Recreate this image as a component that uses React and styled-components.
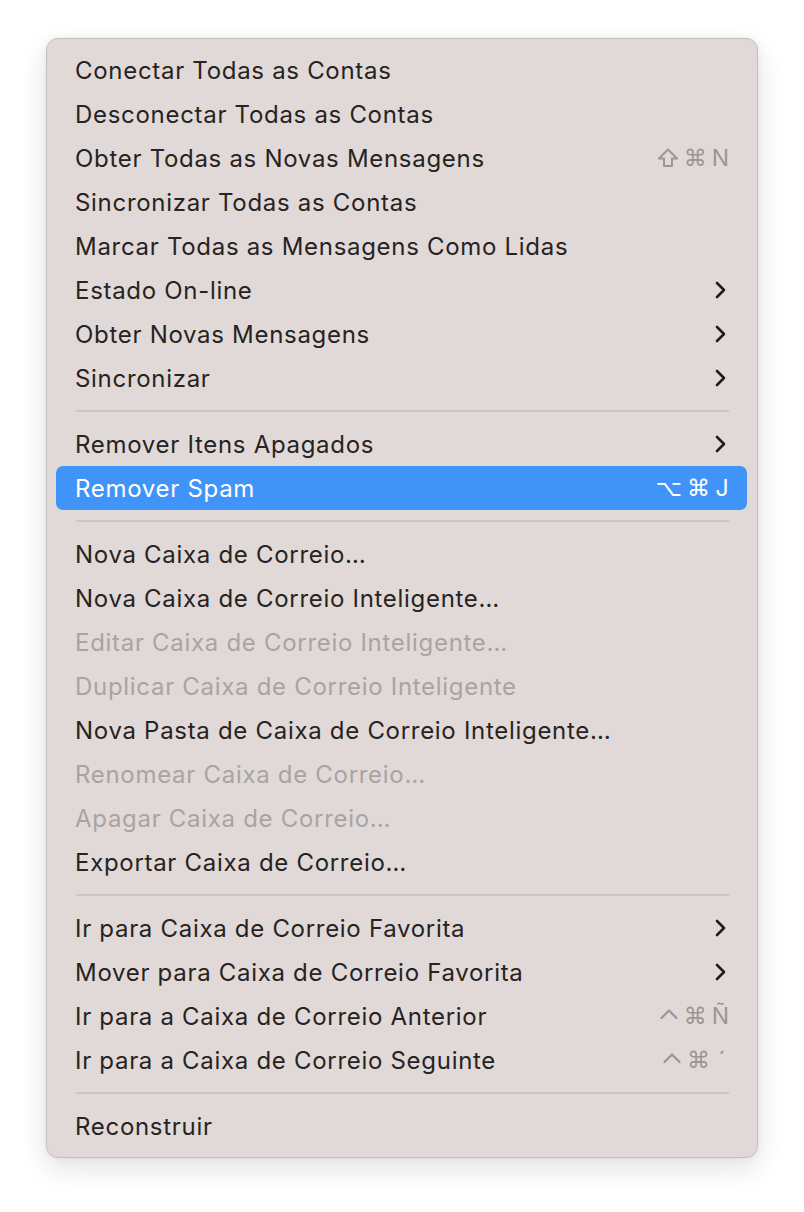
import styled, { createGlobalStyle } from "styled-components";

const GlobalStyle = createGlobalStyle`
  html, body {
    margin: 0;
    padding: 0;
    background: #ffffff;
  }
  body {
    font-family: "Inter", "Liberation Sans", sans-serif;
    -webkit-font-smoothing: antialiased;
  }
`;

const Page = styled.div`
  width: 804px;
  height: 1212px;
  padding: 38px 46px 0 46px;
  box-sizing: border-box;
`;

const Menu = styled.div`
  width: 712px;
  box-sizing: border-box;
  padding: 9px 10px 9px 9px;
  background: #e1d9d8;
  border: 1px solid #c6bfbe;
  border-radius: 12px;
  box-shadow: 0 10px 28px rgba(0, 0, 0, 0.12), 0 0 6px rgba(0, 0, 0, 0.06);
  display: flex;
  flex-direction: column;
`;

const Row = styled.div`
  height: 44px;
  display: flex;
  align-items: center;
  justify-content: space-between;
  padding: 0 18px 0 19px;
  border-radius: 7px;
  font-size: 24px;
  letter-spacing: 0.7px;
  color: ${(p) => (p.$active ? "#ffffff" : p.$disabled ? "#aaa3a2" : "#262322")};
  background: ${(p) => (p.$active ? "#4194f7" : "transparent")};
`;

const Label = styled.span`
  white-space: nowrap;
`;

const Shortcut = styled.span`
  display: flex;
  gap: 5px;
  align-items: center;
  font-size: 23px;
  letter-spacing: 0;
  color: ${(p) => (p.$active ? "#ffffff" : "#9c9594")};
`;

const Key = styled.span`
  min-width: 14px;
  text-align: center;
  font-size: 23px;
  font-family: ${(p) => (p.$symbol ? '"DejaVu Sans", sans-serif' : '"Inter", sans-serif')};
`;

const KeyIcon = styled.span`
  display: flex;
`;

const SubArrow = styled.svg`
  margin-right: 2px;
`;

const Separator = styled.div`
  height: 22px;
  display: flex;
  align-items: center;
  padding: 0 18px 0 20px;
  &::after {
    content: "";
    flex: 1;
    height: 2px;
    background: #cbc4c3;
  }
`;

const Chevron = () => (
  <SubArrow width="14" height="20" viewBox="0 0 14 20">
    <path d="M4 3 L11 10 L4 17" fill="none" stroke="#1f1d1c" strokeWidth="2.6" strokeLinecap="round" strokeLinejoin="round" />
  </SubArrow>
);

const ShiftIcon = () => (
  <svg width="22" height="22" viewBox="0 0 22 22">
    <path d="M11 2.5 L20 11.5 H15 V19 H7 V11.5 H2 Z" fill="none" stroke="currentColor" strokeWidth="2" strokeLinejoin="round" />
  </svg>
);

const ControlIcon = () => (
  <svg width="20" height="22" viewBox="0 0 20 22">
    <path d="M2.5 13 L10 5.5 L17.5 13" fill="none" stroke="currentColor" strokeWidth="2.2" strokeLinecap="round" strokeLinejoin="round" />
  </svg>
);

const keyIcons = { shift: <ShiftIcon />, ctrl: <ControlIcon /> };

const groups = [
  [
    { label: "Conectar Todas as Contas" },
    { label: "Desconectar Todas as Contas" },
    { label: "Obter Todas as Novas Mensagens", keys: ["shift", "⌘", "N"] },
    { label: "Sincronizar Todas as Contas" },
    { label: "Marcar Todas as Mensagens Como Lidas" },
    { label: "Estado On-line", sub: true },
    { label: "Obter Novas Mensagens", sub: true },
    { label: "Sincronizar", sub: true },
  ],
  [
    { label: "Remover Itens Apagados", sub: true },
    { label: "Remover Spam", keys: ["⌥", "⌘", "J"], active: true },
  ],
  [
    { label: "Nova Caixa de Correio…" },
    { label: "Nova Caixa de Correio Inteligente…" },
    { label: "Editar Caixa de Correio Inteligente…", disabled: true },
    { label: "Duplicar Caixa de Correio Inteligente", disabled: true },
    { label: "Nova Pasta de Caixa de Correio Inteligente…" },
    { label: "Renomear Caixa de Correio…", disabled: true },
    { label: "Apagar Caixa de Correio…", disabled: true },
    { label: "Exportar Caixa de Correio…" },
  ],
  [
    { label: "Ir para Caixa de Correio Favorita", sub: true },
    { label: "Mover para Caixa de Correio Favorita", sub: true },
    { label: "Ir para a Caixa de Correio Anterior", keys: ["ctrl", "⌘", "Ñ"] },
    { label: "Ir para a Caixa de Correio Seguinte", keys: ["ctrl", "⌘", "´"] },
  ],
  [{ label: "Reconstruir" }],
];

export default function App() {
  return (
    <>
      <GlobalStyle />
      <Page>
        <Menu>
          {groups.map((items, gi) => (
            <div key={gi}>
              {gi > 0 && <Separator />}
              {items.map((it) => (
                <Row key={it.label} $active={it.active} $disabled={it.disabled}>
                  <Label>{it.label}</Label>
                  {it.keys && (
                    <Shortcut $active={it.active}>
                      {it.keys.map((k, i) =>
                        keyIcons[k] ? (
                          <KeyIcon key={i}>{keyIcons[k]}</KeyIcon>
                        ) : (
                          <Key key={i} $symbol={i < 2}>{k}</Key>
                        )
                      )}
                    </Shortcut>
                  )}
                  {it.sub && <Chevron />}
                </Row>
              ))}
            </div>
          ))}
        </Menu>
      </Page>
    </>
  );
}
